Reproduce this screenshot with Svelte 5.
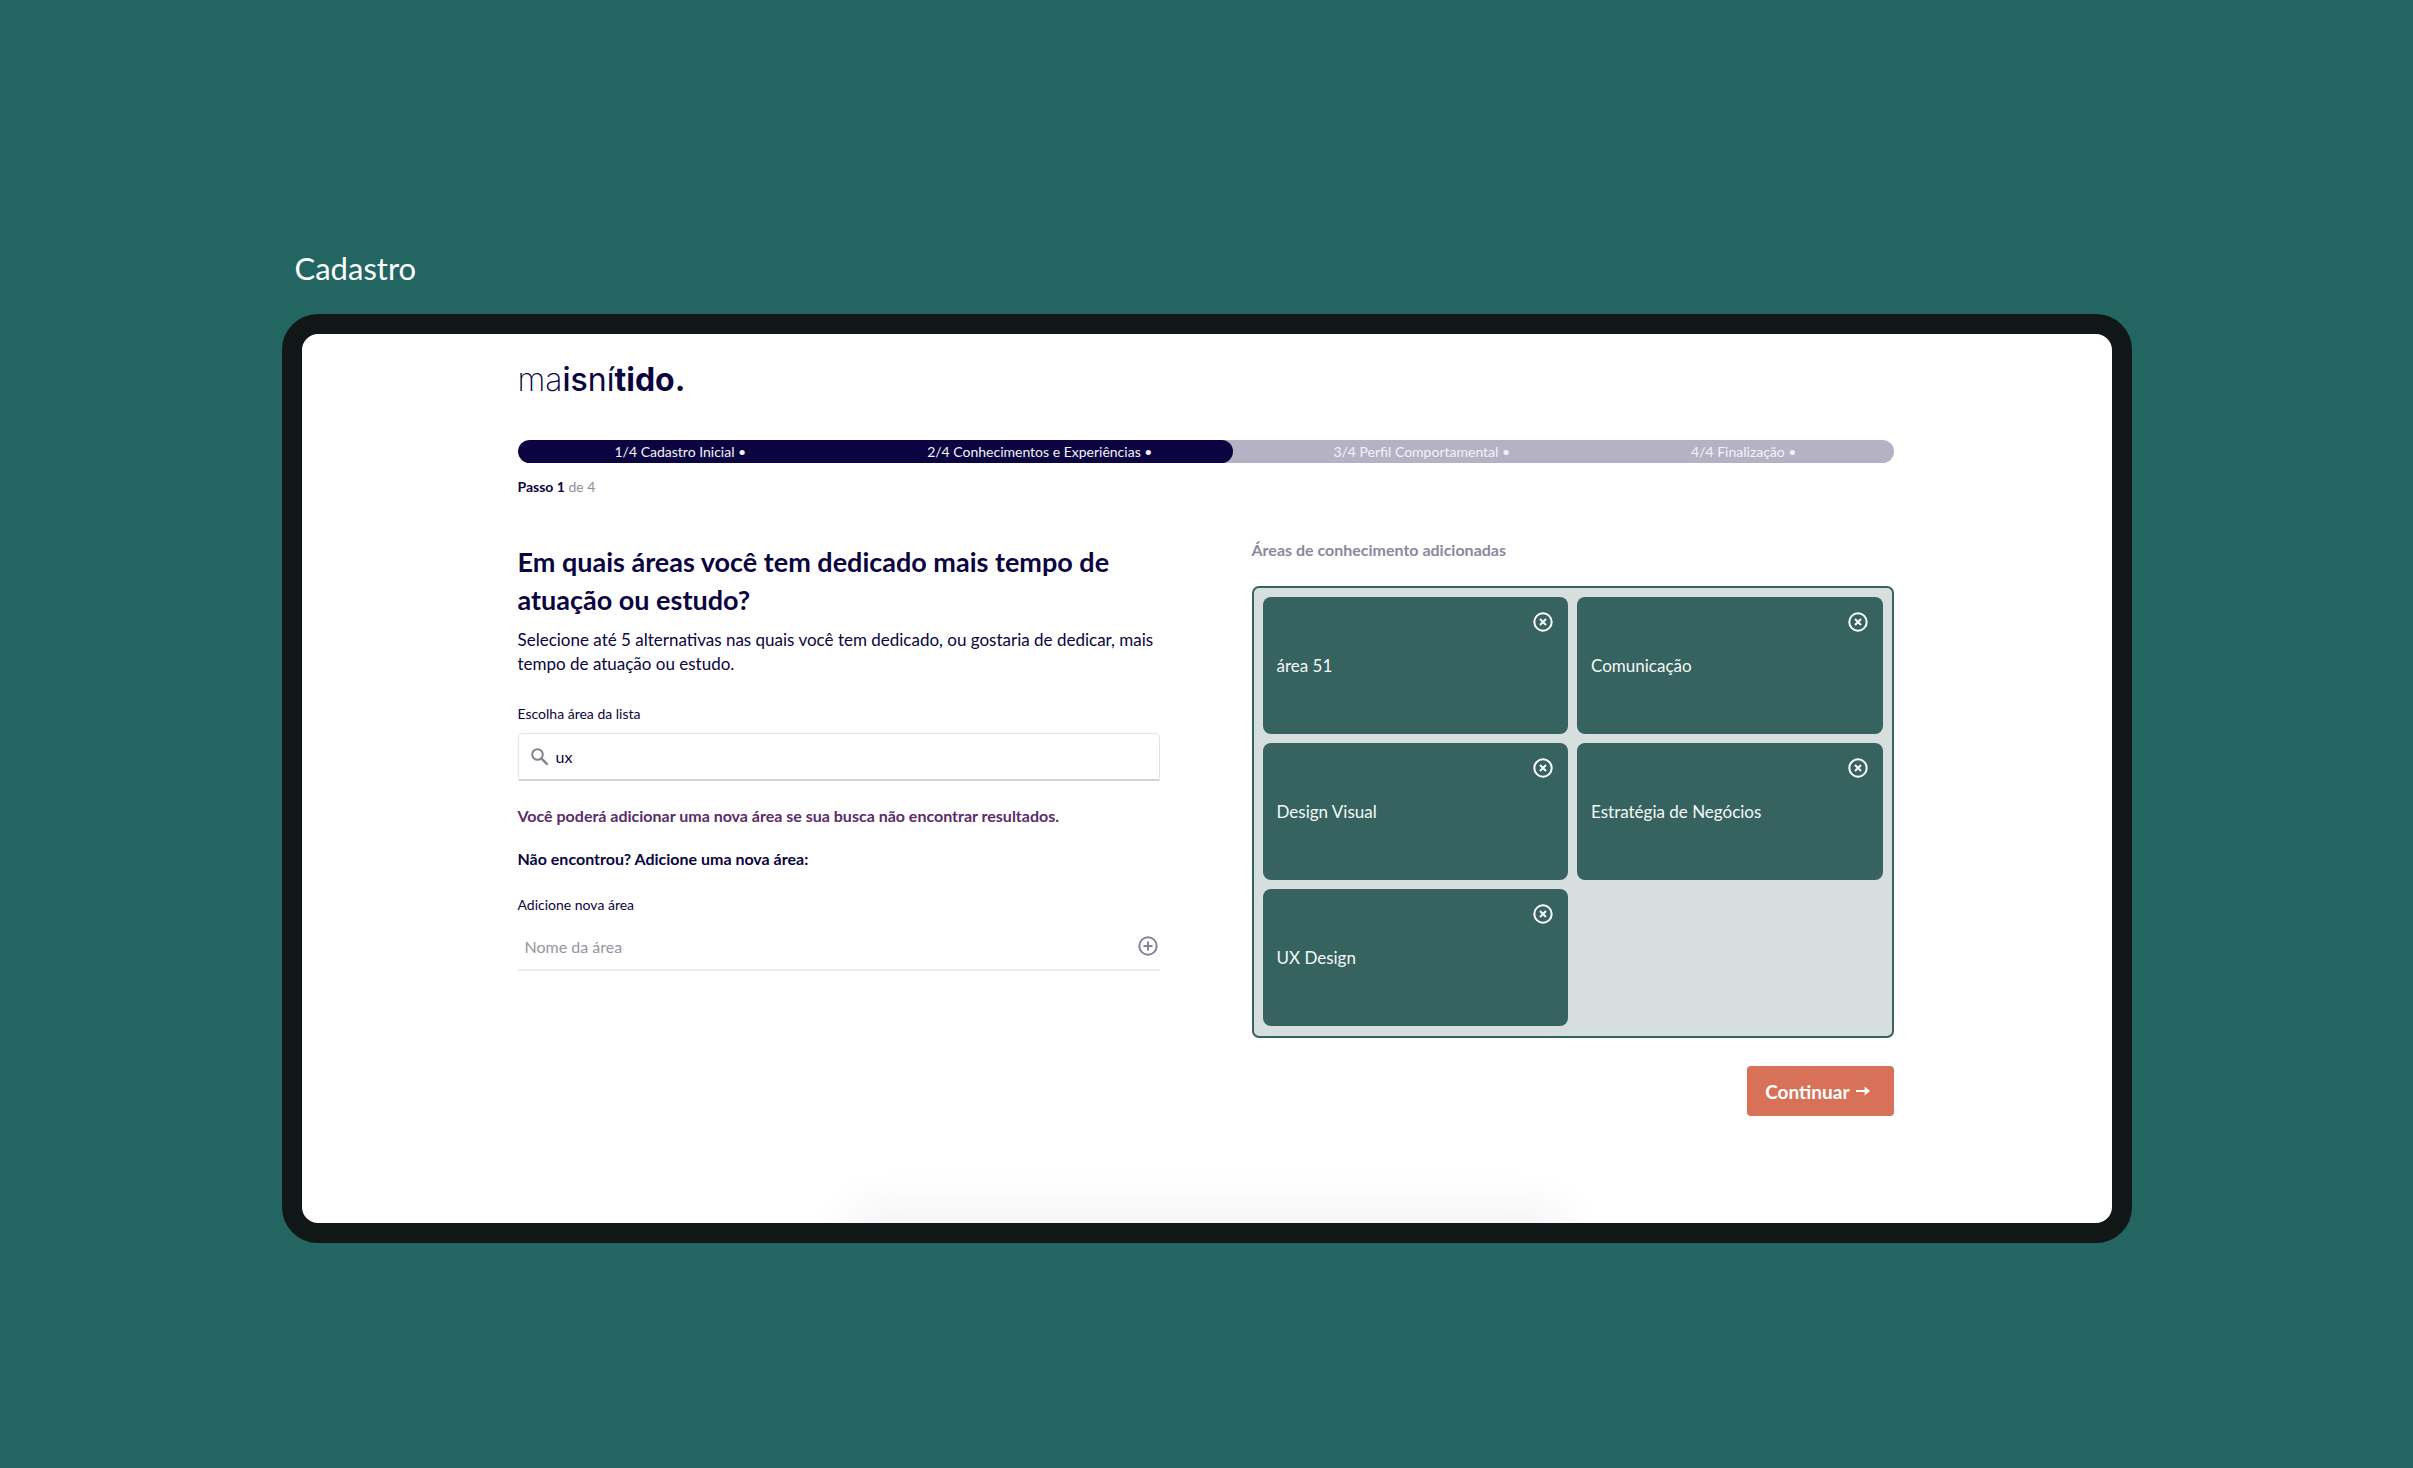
<script>
  let search = $state('ux');
  let newArea = $state('');
  let areas = $state([
    'área 51',
    'Comunicação',
    'Design Visual',
    'Estratégia de Negócios',
    'UX Design',
  ]);

  const steps = [
    '1/4 Cadastro Inicial •',
    '2/4 Conhecimentos e Experiências •',
    '3/4 Perfil Comportamental •',
    '4/4 Finalização •',
  ];

  function remove(name) {
    areas = areas.filter((area) => area !== name);
  }

  function add() {
    const name = newArea.trim();
    if (name && areas.length < 5) areas = [...areas, name];
    newArea = '';
  }
</script>

<div class="page">
  <div class="showcase">
    <h1 class="caption">Cadastro</h1>

    <div class="device">
      <div class="content">
        <a class="logo" href="#inicio" aria-label="maisnítido."
          ><span class="thin">ma</span><span class="semi">is</span><span class="regular">ní</span><span class="heavy">tido.</span></a
        >

        <div class="progress">
          <div class="fill"></div>
          <ol class="steps">
            {#each steps as step}
              <li>{step}</li>
            {/each}
          </ol>
        </div>
        <p class="position"><strong>Passo 1</strong> de 4</p>

        <div class="columns">
          <section class="form">
            <h2>Em quais áreas você tem dedicado mais tempo de atuação ou estudo?</h2>
            <p class="intro">
              Selecione até 5 alternativas nas quais você tem dedicado, ou gostaria de dedicar, mais
              tempo de atuação ou estudo.
            </p>

            <label class="label" for="search">Escolha área da lista</label>
            <div class="search">
              <svg width="18" height="18" viewBox="0 0 18 18" aria-hidden="true">
                <circle cx="6.5" cy="6.5" r="5.3" fill="none" stroke="#85838f" stroke-width="2" />
                <path d="M10.6 10.6 16.6 16.6" stroke="#85838f" stroke-width="2.4" />
              </svg>
              <input id="search" type="text" bind:value={search} />
            </div>

            <p class="notice">Você poderá adicionar uma nova área se sua busca não encontrar resultados.</p>
            <p class="question">Não encontrou? Adicione uma nova área:</p>

            <label class="label" for="new-area">Adicione nova área</label>
            <div class="new-area">
              <input id="new-area" type="text" placeholder="Nome da área" bind:value={newArea} />
              <button class="icon" type="button" aria-label="Adicionar área" onclick={add}>
                <svg width="20" height="20" viewBox="0 0 20 20" fill="none" stroke="#85859a" stroke-width="2">
                  <circle cx="10" cy="10" r="8.7" />
                  <path d="M10 5.5v9M5.5 10h9" />
                </svg>
              </button>
            </div>
          </section>

          <section class="selection">
            <h3>Áreas de conhecimento adicionadas</h3>
            <ul class="cards">
              {#each areas as area (area)}
                <li class="card">
                  <span>{area}</span>
                  <button class="icon close" type="button" aria-label="Remover {area}" onclick={() => remove(area)}>
                    <svg width="20" height="20" viewBox="0 0 20 20" fill="none" stroke="#fff" stroke-width="2">
                      <circle cx="10" cy="10" r="8.7" />
                      <path d="M7 7l6 6M13 7l-6 6" />
                    </svg>
                  </button>
                </li>
              {/each}
            </ul>
            <button class="continue" type="button">
              Continuar
              <svg width="14" height="10" viewBox="0 0 14 10" aria-hidden="true">
                <path d="M0 5h10" stroke="#fff" stroke-width="2" />
                <path d="M8.6 0.6 14 5 8.6 9.4z" fill="#fff" />
              </svg>
            </button>
          </section>
        </div>
      </div>
      <div class="glow"></div>
    </div>
  </div>
</div>

<style>
  :global(body) {
    background: #226561;
  }

  .page,
  .page :global(*) {
    box-sizing: border-box;
  }

  .page {
    min-height: 100vh;
    display: flex;
    justify-content: center;
    align-items: flex-start;
    padding: 248px 24px 80px;
    background: #226561;
    color: #0b0440;
    font-family: Lato, 'Liberation Sans', sans-serif;
  }

  .showcase {
    width: 100%;
    max-width: 1850px;
  }

  h1,
  h2,
  h3,
  p,
  ol,
  ul {
    margin: 0;
    padding: 0;
  }

  ol,
  ul {
    list-style: none;
  }

  .caption {
    padding-left: 13px;
    margin-bottom: 26px;
    color: #fff;
    font-size: 31px;
    font-weight: 400;
    line-height: 40px;
  }

  .device {
    position: relative;
    overflow: hidden;
    border: 20px solid #111617;
    border-radius: 36px;
    background: #fff;
  }

  .content {
    max-width: 1424px;
    margin: 0 auto;
    padding: 26px 25px 107px 23px;
  }

  .logo {
    display: block;
    color: #0b0440;
    font-family: Inter, sans-serif;
    font-size: 32px;
    line-height: 40px;
    text-decoration: none;
  }

  .thin {
    font-weight: 200;
  }

  .semi {
    font-weight: 500;
  }

  .regular {
    font-weight: 400;
  }

  .heavy {
    font-weight: 700;
  }

  .progress {
    display: grid;
    margin-top: 40px;
    border-radius: 12px;
    background: #b6b2c5;
    overflow: hidden;
  }

  .fill,
  .steps {
    grid-area: 1 / 1;
  }

  .fill {
    width: 52%;
    border-radius: 12px;
    background: #0b0440;
  }

  .steps {
    display: flex;
    justify-content: space-between;
    padding: 0 97px;
    color: #f3f2f8;
    font-size: 14px;
    line-height: 23px;
  }

  .position {
    margin-top: 14px;
    color: #8f8f96;
    font-size: 14px;
    line-height: 20px;
  }

  .position strong {
    color: #0b0440;
  }

  .columns {
    display: grid;
    grid-template-columns: 1fr 1fr;
    gap: 92px;
    margin-top: 41px;
  }

  .form {
    padding-top: 5px;
  }

  h2 {
    font-size: 27px;
    font-weight: 700;
    line-height: 38px;
  }

  .intro {
    margin-top: 9px;
    font-size: 17px;
    line-height: 24px;
  }

  .label {
    display: block;
    font-size: 14px;
    line-height: 20px;
  }

  .intro + .label {
    margin-top: 28px;
  }

  input {
    flex: 1;
    min-width: 0;
    padding: 0;
    border: 0;
    outline: 0;
    background: none;
    color: #0b0440;
    font: inherit;
    font-size: 16px;
  }

  input::placeholder {
    color: #9596a0;
    opacity: 1;
  }

  .search {
    display: flex;
    align-items: center;
    gap: 7px;
    height: 48px;
    margin-top: 9px;
    padding: 0 12px;
    border: 1px solid #e4e4e6;
    border-bottom: 2px solid #d2d3d6;
    border-radius: 5px 5px 2px 2px;
  }

  .notice,
  .question {
    font-size: 16px;
    font-weight: 700;
    line-height: 24px;
  }

  .notice {
    margin-top: 23px;
    color: #5b2b6b;
  }

  .question {
    margin-top: 19px;
  }

  .question + .label {
    margin-top: 24px;
  }

  .new-area {
    display: flex;
    align-items: center;
    height: 48px;
    margin-top: 8px;
    padding: 0 2px 0 7px;
    border-bottom: 2px solid #ececee;
  }

  .icon {
    display: flex;
    padding: 0;
    border: 0;
    background: none;
    cursor: pointer;
  }

  .selection {
    display: flex;
    flex-direction: column;
  }

  h3 {
    color: #8a889b;
    font-size: 16px;
    font-weight: 700;
    line-height: 24px;
  }

  .cards {
    display: grid;
    grid-template-columns: 1fr 1fr;
    gap: 9px;
    margin-top: 24px;
    padding: 9px 9px 10px;
    border: 2px solid #36635e;
    border-radius: 7px;
    background: #d6dfde;
  }

  .card {
    position: relative;
    display: flex;
    align-items: center;
    height: 137px;
    padding: 0 14px;
    border-radius: 8px;
    background: #36635f;
    color: #f4f8f7;
    font-size: 17px;
    line-height: 24px;
  }

  .close {
    position: absolute;
    top: 15px;
    right: 15px;
  }

  .continue {
    display: flex;
    align-items: center;
    align-self: flex-end;
    gap: 6px;
    height: 50px;
    margin-top: 28px;
    padding: 0 24px 0 18px;
    border: 0;
    border-radius: 4px;
    background: #d77258;
    color: #fff;
    font: inherit;
    font-size: 19px;
    font-weight: 700;
    cursor: pointer;
  }

  .glow {
    position: absolute;
    top: 100%;
    left: 31%;
    right: 31%;
    height: 20px;
    box-shadow: 0 0 48px 12px rgba(30, 45, 65, 0.07);
  }
</style>
